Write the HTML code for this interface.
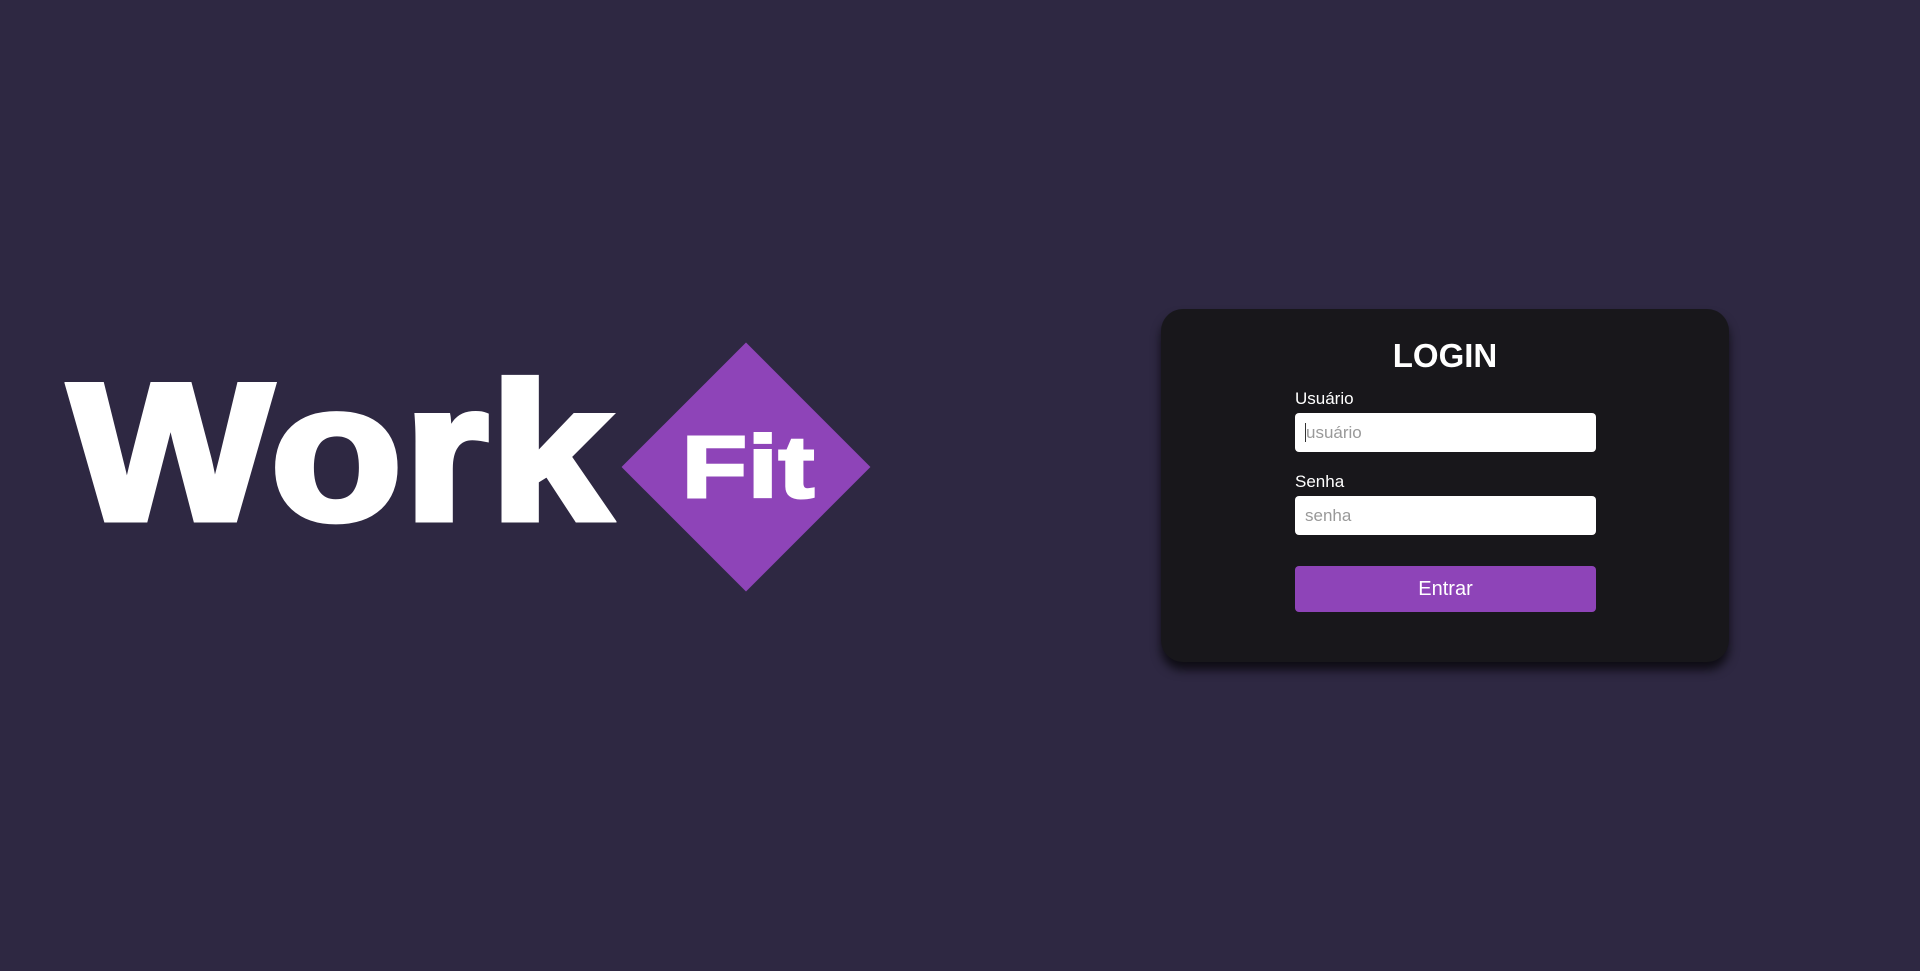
<!DOCTYPE html>
<html><head><meta charset="utf-8"><style>
html,body{margin:0;padding:0;width:1920px;height:971px;background:#2e2842;overflow:hidden;font-family:"Liberation Sans",Arial,sans-serif;}
.work{position:absolute;left:69px;top:356px;font-size:194px;font-weight:bold;color:#fff;-webkit-text-stroke:7px #fff;transform:scaleX(1.11);transform-origin:left top;line-height:1;letter-spacing:2px;white-space:nowrap;}
.dia{position:absolute;left:658px;top:379px;width:176px;height:176px;background:#8e44b8;transform:rotate(45deg);}
.fit{position:absolute;left:682px;top:424px;font-size:87px;font-weight:bold;color:#fff;-webkit-text-stroke:3px #fff;line-height:1;transform:scaleX(1.22);transform-origin:left top;letter-spacing:1px;}
.card{position:absolute;left:1161px;top:309px;width:568px;height:353px;background:#18171b;border-radius:22px;box-shadow:0 8px 10px rgba(0,0,0,.7);}
h1{position:absolute;left:0;right:0;top:28px;margin:0;text-align:center;color:#fff;font-size:33px;font-weight:bold;}
.lbl{position:absolute;left:134px;color:#fff;font-size:17px;}
.inp{position:absolute;left:134px;width:301px;height:39px;background:#fff;border-radius:4px;color:#999;font-size:17px;line-height:39px;box-sizing:border-box;padding-left:10px;}
.btn{position:absolute;left:134px;top:257px;width:301px;height:46px;background:#8e44b8;border-radius:4px;color:#fff;font-size:20px;text-align:center;line-height:46px;}
</style></head><body>
<div class="work">Work</div>
<div class="dia"></div>
<div class="fit">Fit</div>
<div class="card">
<h1>LOGIN</h1>
<div class="lbl" style="top:80px">Usuário</div>
<div class="inp" style="top:104px"><span style="border-left:1px solid #333;"></span>usuário</div>
<div class="lbl" style="top:163px">Senha</div>
<div class="inp" style="top:187px">senha</div>
<div class="btn">Entrar</div>
</div>
</body></html>
